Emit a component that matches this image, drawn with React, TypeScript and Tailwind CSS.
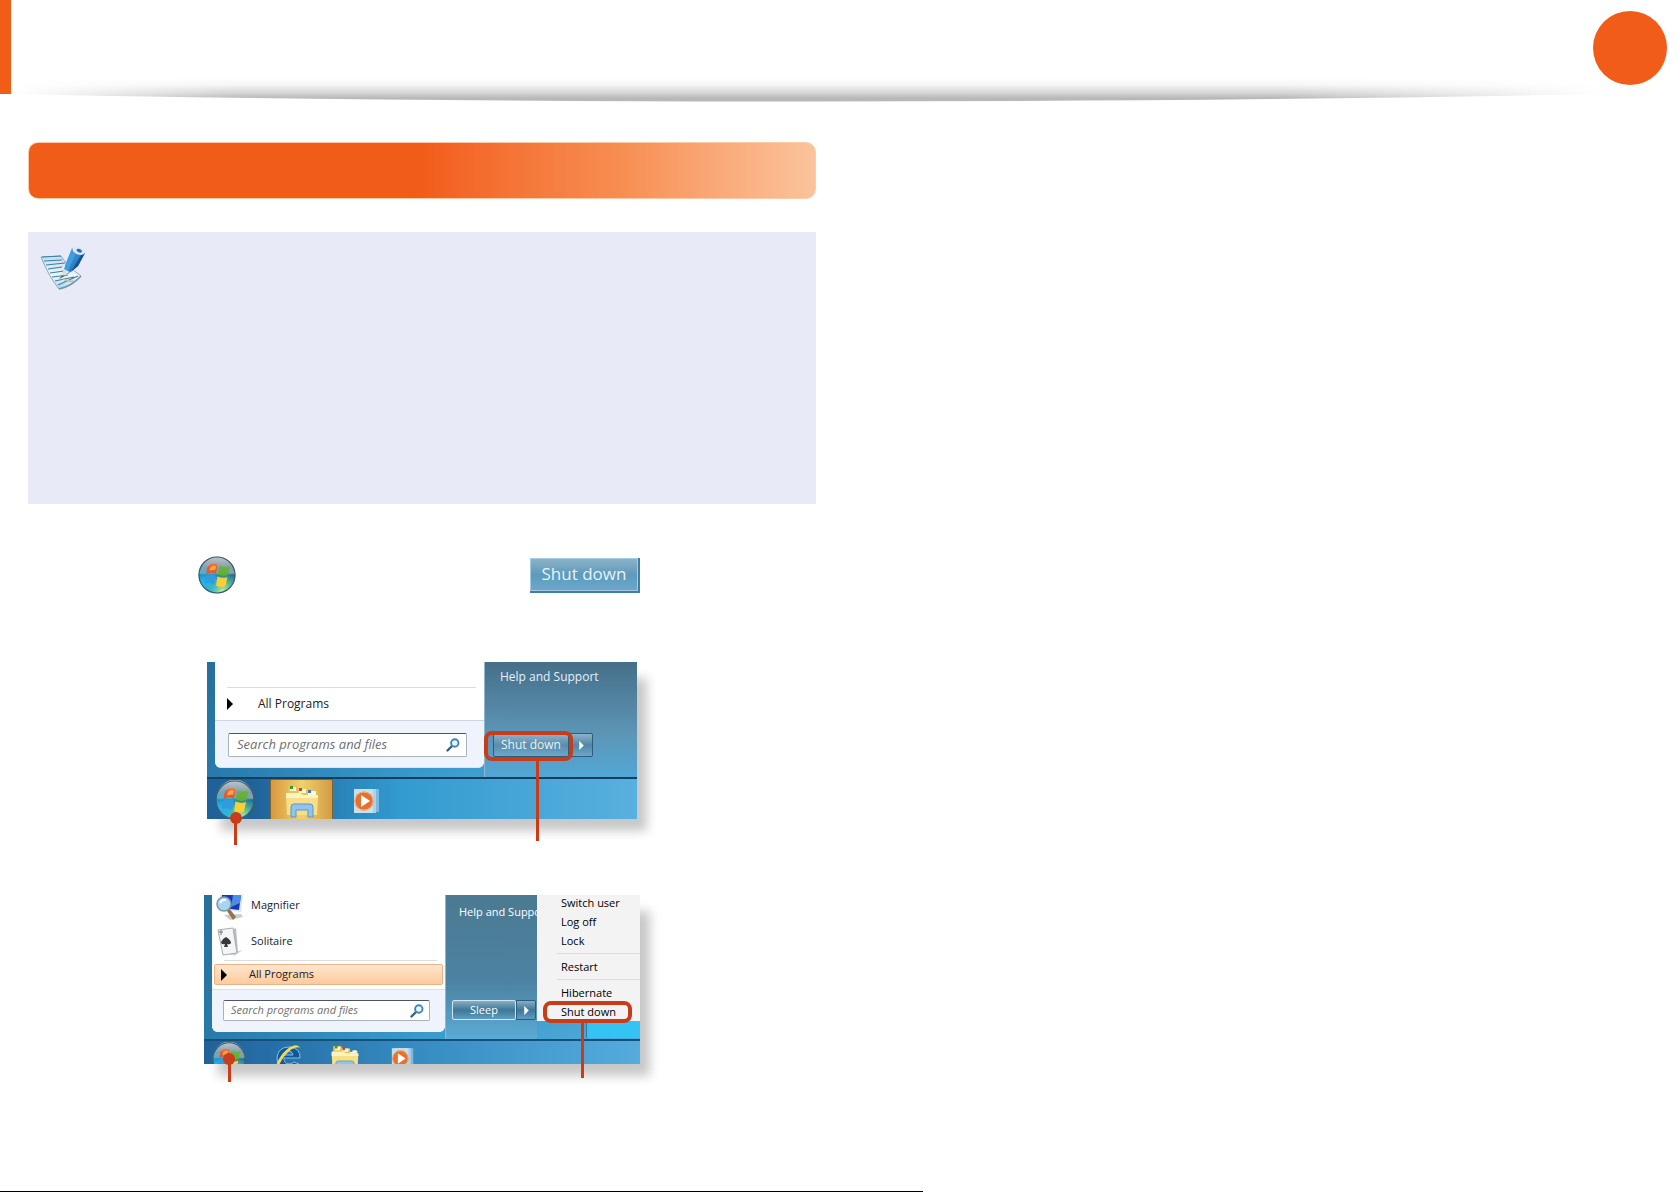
function NoteIcon() {
  return (
    <svg viewBox="0 0 46 44" className="w-[46px] h-11" aria-hidden="true">
      <defs>
        <linearGradient id="pencil" x1="0" y1="0" x2="1" y2="1">
          <stop offset="0" stopColor="#5bb4e6" />
          <stop offset="0.5" stopColor="#2f86cc" />
          <stop offset="1" stopColor="#174f9c" />
        </linearGradient>
        <linearGradient id="paper" x1="0" y1="0" x2="0" y2="1">
          <stop offset="0" stopColor="#c3dceb" />
          <stop offset="0.6" stopColor="#eef6fb" />
          <stop offset="1" stopColor="#a9d6ea" />
        </linearGradient>
      </defs>
      <path d="M1 11 L21 10 Q27 20 41 30 Q32 41 19 43 Q9 31 1 11Z" fill="url(#paper)" stroke="#8fa9b8" strokeWidth="1" />
      <path d="M2 11 L21 10 M4 15 L22 14 M6 19 L25 17 M8 23 L22 21 M10 27 L24 25 M12 31 L28 29 M15 35 L34 31 M18 39 L38 30" stroke="#3d7fa6" strokeWidth="1.1" fill="none" />
      <path d="M19 43 Q32 40 41 30" stroke="#6f97a8" strokeWidth="1.5" fill="none" />
      <path d="M32 2 L45 7 L38 20 L28 28 L23 27 L26 17Z" fill="url(#pencil)" />
      <path d="M32 3 L36 7 L28 25 L24 26 L26 18Z" fill="#3f9fdd" />
      <path d="M41 9 L45 7 L38 20 L31 26Z" fill="#1b4f92" />
      <path d="M24 23 L30 26 L20 32Z" fill="#d5e0e4" />
      <path d="M22 29 L25 30 L19 33Z" fill="#53646d" />
      <ellipse cx="38.500" cy="4.600" rx="6.500" ry="3.800" transform="rotate(22 38.500 5)" fill="#dce9f2" />
      <ellipse cx="39" cy="4.400" rx="2.800" ry="1.700" transform="rotate(22 38.500 5)" fill="#2b6cb0" />
      <path d="M23 33 Q28 36 34 35" stroke="#c7b9a4" strokeWidth="1.5" fill="none" />
    </svg>
  );
}

function StartOrb({ className }: { className: string }) {
  return (
    <svg viewBox="0 0 40 40" className={className} aria-hidden="true">
      <defs>
        <linearGradient id="orbBase" x1="0" y1="0" x2="0" y2="1">
          <stop offset="0" stopColor="#7d8d98" />
          <stop offset="0.45" stopColor="#7ea0ac" />
          <stop offset="0.5" stopColor="#14609a" />
          <stop offset="1" stopColor="#3fc0e0" />
        </linearGradient>
        <radialGradient id="orbGlow" cx="0.65" cy="0.95" r="0.6">
          <stop offset="0" stopColor="#b6f09a" />
          <stop offset="0.6" stopColor="#57b98c" stopOpacity="0.6" />
          <stop offset="1" stopColor="#57b98c" stopOpacity="0" />
        </radialGradient>
        <radialGradient id="orbBlue" cx="0.15" cy="0.7" r="0.5">
          <stop offset="0" stopColor="#27b6f0" />
          <stop offset="1" stopColor="#27b6f0" stopOpacity="0" />
        </radialGradient>
        <linearGradient id="orbShine" x1="0" y1="0" x2="0" y2="1">
          <stop offset="0" stopColor="#fff" stopOpacity="0.55" />
          <stop offset="0.6" stopColor="#fff" stopOpacity="0.05" />
          <stop offset="1" stopColor="#fff" stopOpacity="0" />
        </linearGradient>
      </defs>
      <circle cx="20" cy="20" r="19.300" fill="url(#orbBase)" />
      <circle cx="20" cy="20" r="19" fill="url(#orbGlow)" />
      <circle cx="20" cy="20" r="19" fill="url(#orbBlue)" />
      <path d="M10 11 Q15 6 20.500 9 L19 18.500 Q13 16 8.500 19Z" fill="#e4531f" />
      <path d="M13 12 Q16 9 19 11 L18 15 Q15 14 12 16Z" fill="#f4a03c" />
      <path d="M22.500 10 Q28 13 34 10 Q32 15 31.500 20 Q26 22 21 19.500Z" fill="#5fae35" />
      <path d="M8 21 Q13 18 18.500 20.500 L17 30 Q12 27 6.500 29Z" fill="#2f9ddd" />
      <path d="M20.500 21.500 Q26 24 31 22 L29 31.500 Q24 34 19 31Z" fill="#f8cf35" />
      <path d="M1.500 18 A18.500 18.500 0 0 1 38.500 18 Q30 21 20 19.500 Q10 18 1.500 21Z" fill="url(#orbShine)" />
      <circle cx="20" cy="20" r="19" fill="none" stroke="#3f5a6a" strokeWidth="1.200" />
    </svg>
  );
}

function FolderIcon({ className }: { className: string }) {
  return (
    <svg viewBox="0 0 36 34" className={className} aria-hidden="true">
      <path d="M4 2 h9 l2 3 h9 l2 3 h7 v22 H3Z" fill="#e7c458" />
      <path d="M6 3 h6 v4 H6Z M15 5 h7 v4 h-7Z M24 7 h8 v4 h-8Z" fill="#fbf6dc" />
      <path d="M6 2 h3 v3 H6Z" fill="#3d9a3a" />
      <path d="M15 4 h3 v3 h-3Z" fill="#c8452e" />
      <path d="M24 6 h3 v3 h-3Z" fill="#2f7cc0" />
      <path d="M2 9 h14 l3 2 h15 l-1 20 H3Z" fill="#f6df86" />
      <path d="M2 9 h14 l3 2 h15 v3 H2Z" fill="#fdf3be" />
      <path d="M7 33 v-10 q0-3 3-3 h16 q3 0 3 3 v10 h-5 v-7 H12 v7Z" fill="#8ec5ec" stroke="#5c97c8" strokeWidth="1" />
    </svg>
  );
}

function MediaIcon({ className }: { className: string }) {
  return (
    <svg viewBox="0 0 28 26" className={className} aria-hidden="true">
      <path d="M7 1 h19 v23 H7Z" fill="#7db9de" />
      <path d="M4 1 h19 v24 H4Z" fill="#a9d3ec" />
      <path d="M1 1 h19 v24 H1Z" fill="#c6e0ef" />
      <circle cx="11" cy="13" r="9.500" fill="#e9702a" />
      <circle cx="11" cy="13" r="9" fill="none" stroke="#f5b184" />
      <path d="M8 7 L17 13 L8 19Z" fill="#fff" />
    </svg>
  );
}

function ExplorerIcon() {
  return (
    <svg viewBox="0 0 28 28" className="w-7 h-7" aria-hidden="true">
      <path d="M26 15 H10 Q10 21 15 21 Q18 21 20 19 L25 21 Q20 27 14 27 Q3 26 3 15 Q4 4 15 4 Q27 5 26 15Z M10 12 H19 Q18 8 15 8 Q11 8 10 12Z" fill="#15569a" stroke="#79c4ef" fillRule="evenodd" />
      <path d="M1 27 Q4 12 16 4 Q24 0 26 5 Q24 3 18 6 Q8 13 3 27Z" fill="#f4d75c" />
    </svg>
  );
}

function MagnifierIcon() {
  return (
    <svg viewBox="0 0 28 26" className="w-7 h-[26px]" aria-hidden="true">
      <path d="M4 0 H27 L25 17 L4 15Z" fill="#dfe7ee" />
      <path d="M6 0 H25 L23 15 L6 13Z" fill="#1737b8" />
      <path d="M17 0 H25 L24 8 L15 12Z" fill="#4d8be6" />
      <path d="M8 20 L25 19 L27 22 L14 25Z" fill="#c9ccce" />
      <path d="M13 13 L20 22 L17 25 L11 16Z" fill="#97714a" />
      <circle cx="8" cy="9" r="7" fill="#a7d5f1" stroke="#7997a9" strokeWidth="1.500" />
      <path d="M4 8 Q6 4 10 5" stroke="#fff" strokeWidth="2" fill="none" />
    </svg>
  );
}

function SolitaireIcon() {
  return (
    <svg viewBox="0 0 28 30" className="w-7 h-[30px]" aria-hidden="true">
      <path d="M14 26 L27 23 L18 29Z" fill="#d5d5d5" />
      <path d="M14 4 L20 1 L22 25 L14 28Z" fill="#b9bdbf" />
      <path d="M2 3 L17 1 L21 26 L7 28Z" fill="#f4f5f6" stroke="#a9adb0" />
      <path d="M3 5 h4 M5 3 v5" stroke="#70767a" />
      <path d="M10 10 Q15 13 15 16 Q14 18 11 17 L12 20 H8 L9 17 Q5 18 5 15 Q6 12 10 10Z" fill="#35393c" />
    </svg>
  );
}

function SearchIcon() {
  return (
    <svg viewBox="0 0 14 14" className="size-[14px] shrink-0" aria-hidden="true">
      <path d="M1.500 12.500 L6 8" stroke="#2f6488" strokeWidth="2.400" strokeLinecap="round" />
      <circle cx="8.800" cy="5" r="3.700" fill="#e6f4fb" stroke="#3f86b3" strokeWidth="1.900" />
    </svg>
  );
}

function Triangle({ className }: { className: string }) {
  return (
    <svg viewBox="0 0 6 12" className={className} aria-hidden="true">
      <path d="M0 0 L6 6 L0 12Z" fill="currentColor" />
    </svg>
  );
}

function SearchBox({ className }: { className: string }) {
  return (
    <div className={`flex items-center rounded-xs border border-[#a9b2bb] border-t-[#4d565e] bg-white ${className}`}>
      <input
        type="text"
        aria-label="Search programs and files"
        placeholder="Search programs and files"
        className="min-w-0 flex-1 italic outline-none placeholder:text-[#707070]"
      />
      <SearchIcon />
    </div>
  );
}

function StartDesktop() {
  return (
    <figure className="relative ml-[179px] w-[430px] text-[12px]">
      <div className="overflow-hidden bg-linear-to-r from-[#2372a4] via-[#3a9bce] to-[#55b0dd] shadow-[12px_14px_10px_-2px_rgba(0,0,0,0.22)]">
        <div className="flex h-[115px] bg-linear-to-b from-[#2a6d95]/60 to-[#3b9acb]/20 pl-2">
          <div className="flex h-[106px] w-[269px] flex-col rounded-b-md border-b border-[#d5e7f3] bg-white">
            <div className="mr-2 ml-3 h-[26px] border-b border-[#dcdcdc]" />
            <button type="button" className="flex h-8 items-center pl-3 text-[#222]">
              <Triangle className="mr-[25px] h-3 w-[6px] text-black" />
              All Programs
            </button>
            <div className="flex-1 rounded-b-md border-t border-[#c8d8e6] bg-[#eff3fb] px-[13px] pt-3 text-[13px]">
              <SearchBox className="h-6 w-[239px] pr-[6px] pl-2" />
            </div>
          </div>
          <div className="flex-1 border-l border-[#8fb8cc] bg-linear-to-b from-[#466f89] via-[#5c94b4] via-60% to-[#51a7d6] text-white">
            <a href="#help" className="block h-[71px] pt-[6px] pl-[15px] text-[#e6f1f7]">Help and Support</a>
            <div className="flex h-6 pl-2">
              <button type="button" className="w-[76px] rounded-xs border border-[#2d5d7a] bg-linear-to-b from-[#8cb3c9] via-[#5c8dab] to-[#6ba8c9] text-[#e6f1f7]">
                Shut down
              </button>
              <button type="button" aria-label="More options" className="flex w-6 items-center justify-center rounded-r-xs border border-[#2d5d7a] bg-linear-to-b from-[#8cb3c9] via-[#5187a8] to-[#6ba8c9]">
                <Triangle className="h-[9px] w-[5px]" />
              </button>
            </div>
          </div>
        </div>
        <div className="flex h-[42px] border-t-2 border-[#14405b] bg-linear-to-r from-[#1f6299] from-10% via-[#329bcf] via-45% to-[#58b0de]">
          <div className="w-[63px] pt-px pl-2">
            <StartOrb className="h-10 w-10" />
          </div>
          <div className="flex w-[63px] justify-center rounded-t-xs border border-b-0 border-[#7b6537] bg-linear-to-r from-[#d9983f] via-[#efd26c] to-[#d39c45] pt-1">
            <FolderIcon className="h-[34px] w-9" />
          </div>
          <div className="pt-[9px] pl-5">
            <MediaIcon className="h-[26px] w-7" />
          </div>
        </div>
      </div>

      {/* Callouts */}
      <div className="absolute top-[69px] left-[277px] h-[30px] w-[89px] rounded-lg border-4 border-[#c83c18]" />
      <div className="absolute top-[98px] left-[329px] h-[81px] w-[3px] bg-[#c83c18]" />
      <div className="absolute top-[150px] left-[23px] size-3 rounded-full bg-[#c83c18]" />
      <div className="absolute top-[158px] left-[27px] h-[25px] w-[3px] bg-[#c83c18]" />
    </figure>
  );
}

function MenuItem({ label }: { label: string }) {
  return (
    <button type="button" className="block h-[19px] w-full shrink-0 pl-1 text-left leading-5 whitespace-nowrap">
      {label}
    </button>
  );
}

function SleepDesktop() {
  return (
    <figure className="relative ml-44 w-[436px] text-[11px]">
      <div className="overflow-hidden bg-linear-to-r from-[#2372a4] via-[#3a9bce] to-[#55b0dd] shadow-[12px_14px_10px_-2px_rgba(0,0,0,0.22)]">
        <div className="flex h-36 bg-linear-to-b from-[#2a6d95]/60 to-[#3b9acb]/20 pl-2">
          <div className="flex h-[137px] w-[233px] flex-col rounded-b-md bg-white text-[#222]">
            <div className="flex h-7 items-start gap-[7px] pl-1">
              <MagnifierIcon />
              <span className="pt-[2px]">Magnifier</span>
            </div>
            <div className="flex h-[37px] items-center gap-[7px] pl-1">
              <SolitaireIcon />
              <span>Solitaire</span>
            </div>
            <div className="mr-2 ml-3 h-1 border-t border-[#dcdcdc]" />
            <button type="button" className="mx-[2px] flex h-[21px] items-center rounded-xs border border-[#eab487] bg-linear-to-b from-[#ffe5cd] to-[#fdcb9d] pl-[6px]">
              <Triangle className="mr-[22px] h-3 w-[6px] text-black" />
              All Programs
            </button>
            <div className="mt-1 flex-1 rounded-b-md border-t border-[#d4e1ec] bg-[#eff3fb] px-[11px] pt-[10px]">
              <SearchBox className="h-[21px] w-[207px] pr-[5px] pl-[7px]" />
            </div>
          </div>
          <div className="w-[92px] overflow-hidden border-l border-[#8fb8cc] bg-linear-to-b from-[#4b7a92] via-[#4c83a2] via-60% to-[#5aabd6] text-white">
            <a href="#support" className="block h-[105px] pt-[9px] pl-[13px] whitespace-nowrap">Help and Support</a>
            <div className="flex h-5 pl-[6px] leading-4">
              <button type="button" className="w-16 rounded-xs border border-[#d3e6f0] bg-linear-to-b from-[#86afc5] via-[#3f7797] to-[#5e9dc0]">
                Sleep
              </button>
              <button type="button" aria-label="Power options" className="flex w-5 items-center justify-center rounded-r-xs border border-[#2d5d7a] bg-linear-to-b from-[#86afc5] via-[#3f7797] to-[#5e9dc0]">
                <Triangle className="h-[9px] w-[5px]" />
              </button>
            </div>
          </div>
          <div className="flex-1">
            <div className="flex h-[126px] flex-col justify-end overflow-hidden bg-[#f3f3f3] pl-5 text-black">
              <MenuItem label="Switch user" />
              <MenuItem label="Log off" />
              <MenuItem label="Lock" />
              <hr className="my-[3px] border-[#dcdcdc]" />
              <MenuItem label="Restart" />
              <hr className="my-[3px] border-[#dcdcdc]" />
              <MenuItem label="Hibernate" />
              <MenuItem label="Shut down" />
            </div>
            <div className="ml-[49px] h-[17px] border-l border-[#2b7ba8] bg-[#35c3f3]" />
          </div>
        </div>
        <div className="flex h-[25px] items-start border-t-2 border-[#14507a] bg-linear-to-r from-[#1f6299] via-[#3489c0] via-45% to-[#55abdc]">
          <StartOrb className="mt-px ml-2 h-[34px] w-[34px] shrink-0" />
          <div className="ml-7 pt-[2px]">
            <ExplorerIcon />
          </div>
          <div className="ml-7 pt-[3px]">
            <FolderIcon className="h-[29px] w-[30px]" />
          </div>
          <div className="ml-[31px] pt-[6px]">
            <MediaIcon className="h-[23px] w-6" />
          </div>
        </div>
      </div>

      {/* Callouts */}
      <div className="absolute top-[106px] left-[339px] h-[22px] w-[89px] rounded-lg border-4 border-[#c83c18]" />
      <div className="absolute top-[127px] left-[377px] h-14 w-[3px] bg-[#c83c18]" />
      <div className="absolute top-[158px] left-[19px] size-3 rounded-full bg-[#c83c18]" />
      <div className="absolute top-[166px] left-[24px] h-[21px] w-[3px] bg-[#c83c18]" />
    </figure>
  );
}

export default function App() {
  return (
    <div className="flex min-h-screen flex-col bg-white font-['Open_Sans','Noto_Sans',sans-serif]">
      <header className="relative flex h-[94px] justify-between">
        <div className="w-[11px] bg-[#f25c19]" />
        <div className="mt-[11px] mr-3 size-[74px] rounded-full bg-[#f25c19]" />
        {/* Curved page shadow, hangs just below the header */}
        <svg viewBox="0 0 1600 24" preserveAspectRatio="none" className="absolute top-[78px] left-[11px] h-6 w-[calc(100%-86px)]" aria-hidden="true">
          <defs>
            <linearGradient id="shadeY" x1="0" y1="0" x2="0" y2="24" gradientUnits="userSpaceOnUse">
              <stop offset="0" stopColor="#000" stopOpacity="0" />
              <stop offset="0.3" stopColor="#000" stopOpacity="0.04" />
              <stop offset="0.65" stopColor="#000" stopOpacity="0.18" />
              <stop offset="0.85" stopColor="#000" stopOpacity="0.28" />
              <stop offset="1" stopColor="#000" stopOpacity="0.28" />
            </linearGradient>
            <linearGradient id="shadeX">
              <stop offset="0" stopColor="#fff" stopOpacity="0" />
              <stop offset="0.14" stopColor="#fff" />
              <stop offset="0.8" stopColor="#fff" />
              <stop offset="1" stopColor="#fff" stopOpacity="0" />
            </linearGradient>
            <mask id="shadeMask">
              <rect width="1600" height="24" fill="url(#shadeX)" />
            </mask>
          </defs>
          <path d="M0 0 H1600 V16 C1100 26 500 26 0 16Z" fill="url(#shadeY)" mask="url(#shadeMask)" />
        </svg>
      </header>

      <main className="grid grid-cols-2 gap-[47px] px-7 pt-12">
        <section>
          <div className="h-[57px] rounded-[10px] border border-[#fbcba8] bg-linear-to-r from-[#f25c19] from-50% via-[#f78d50] via-75% to-[#fbc39c]" />

          <div className="mt-[33px] h-[272px] bg-[#e8ebf7] px-3 py-[14px]">
            <NoteIcon />
          </div>

          <div className="mt-[52px] mb-[68px] flex h-[38px] items-center pl-[170px]">
            <StartOrb className="h-[38px] w-[38px]" />
            <button type="button" className="ml-[294px] h-[35px] w-[110px] border-r-2 border-b-2 border-[#3f7fa5] bg-linear-to-b from-[#8db3c8] via-[#5f9abb] to-[#6aa9cb] text-[17px] font-medium text-[#e4f3fb] inset-ring inset-ring-[#a4cbdf]">
              Shut down
            </button>
          </div>

          <StartDesktop />
          <div className="h-[76px]" />
          <SleepDesktop />
        </section>
      </main>

      <footer className="mt-auto h-px">
        <div className="h-px w-[55%] bg-black" />
      </footer>
    </div>
  );
}
